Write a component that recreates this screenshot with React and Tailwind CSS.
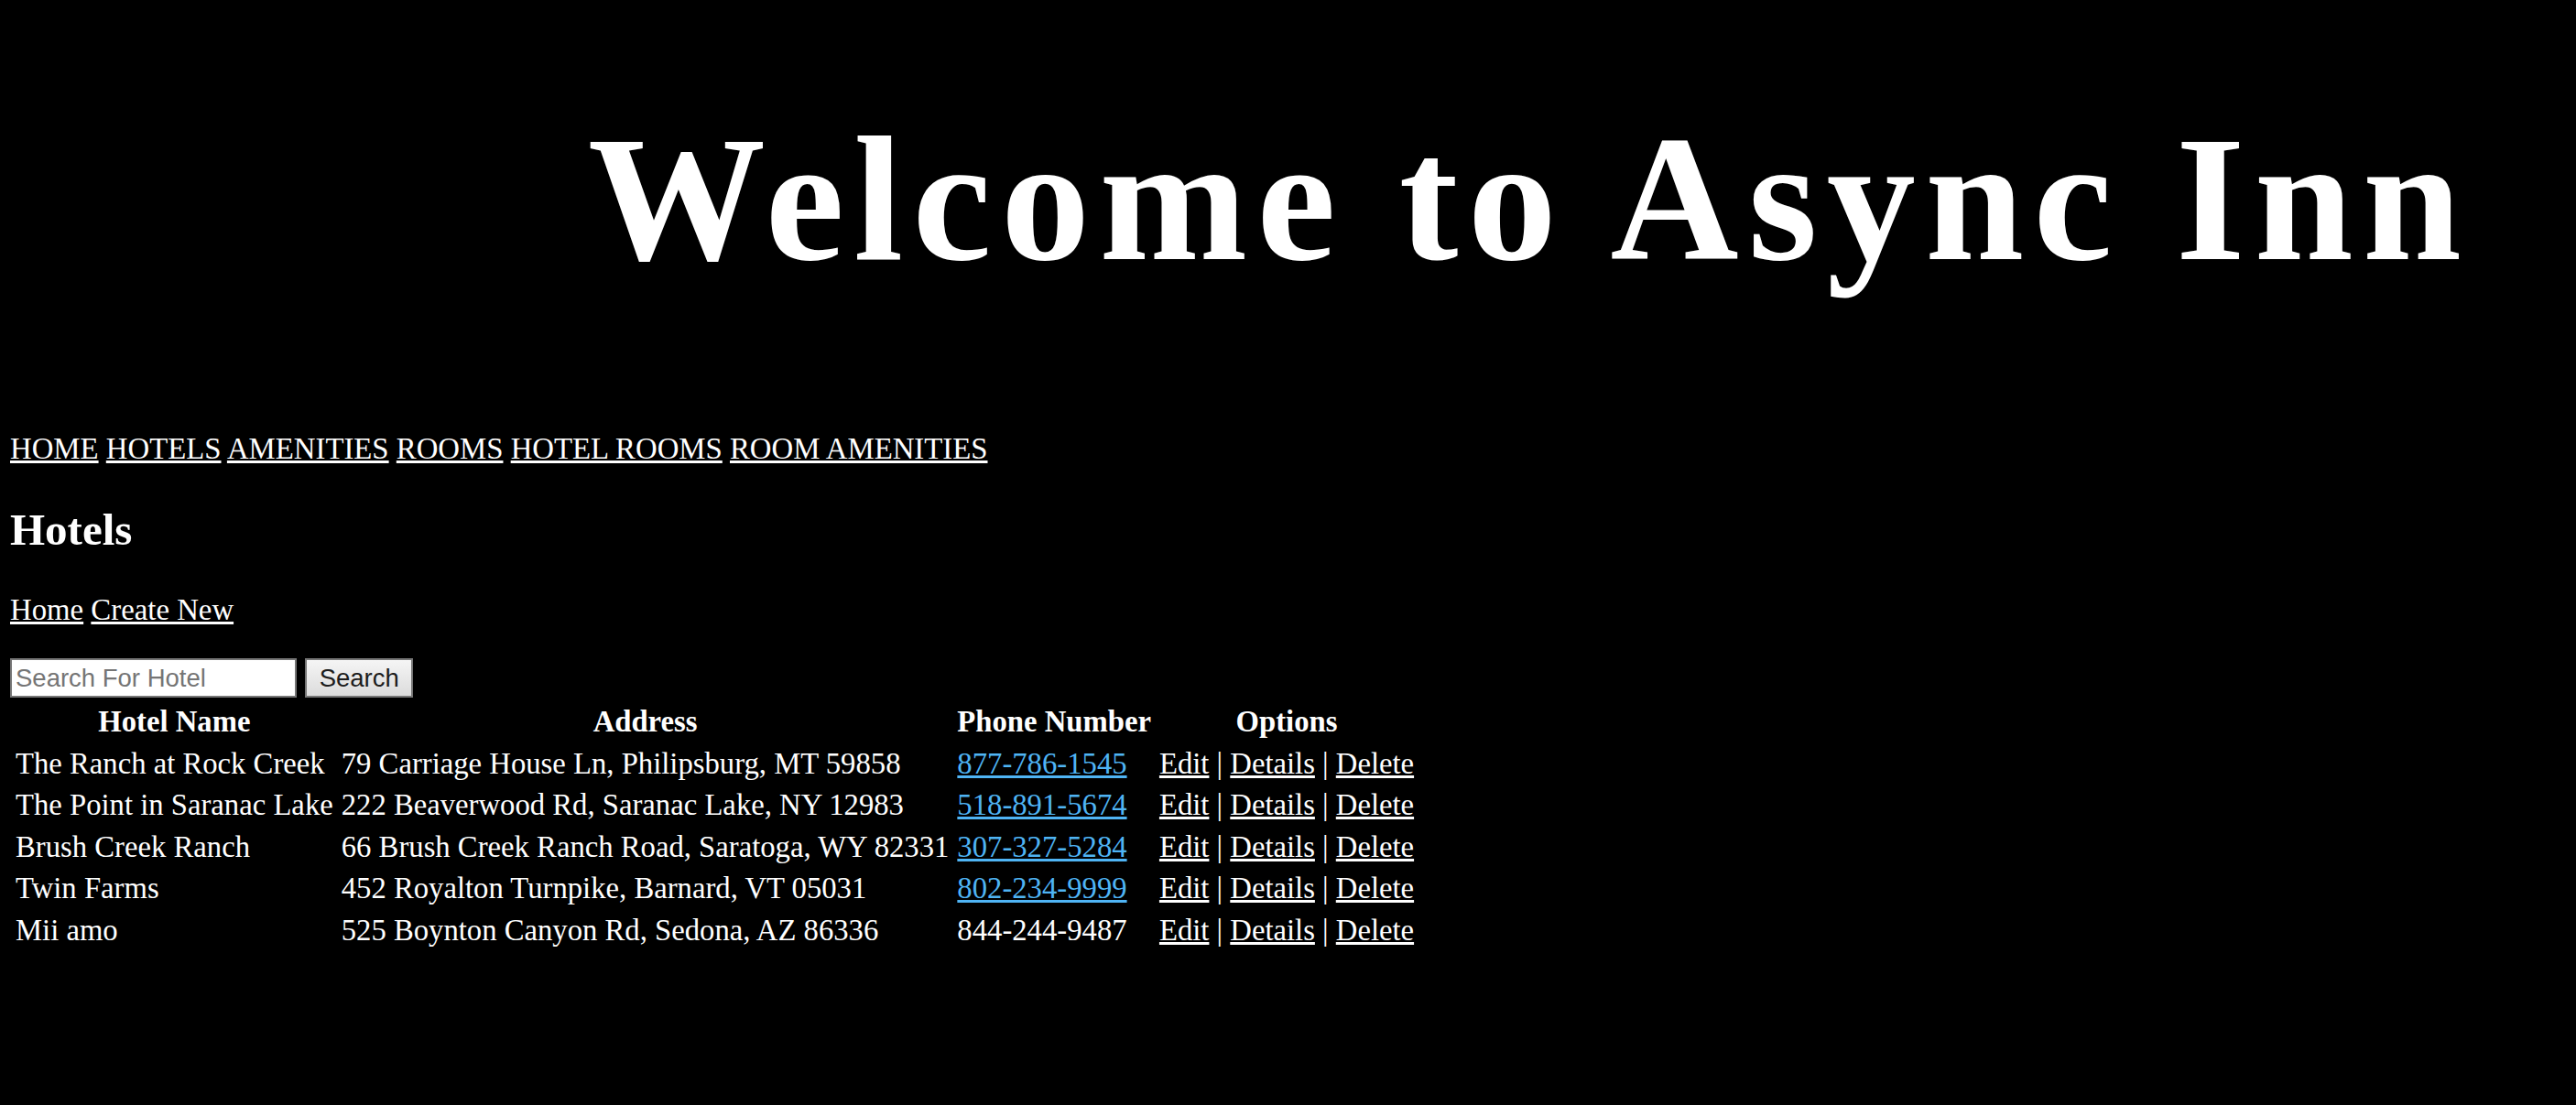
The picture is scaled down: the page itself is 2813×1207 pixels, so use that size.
import React from 'react';

const navLinks = ['HOME', 'HOTELS', 'AMENITIES', 'ROOMS', 'HOTEL ROOMS', 'ROOM AMENITIES'];

const hotels = [
    { name: 'The Ranch at Rock Creek', address: '79 Carriage House Ln, Philipsburg, MT 59858', phone: '877-786-1545', link: true },
    { name: 'The Point in Saranac Lake', address: '222 Beaverwood Rd, Saranac Lake, NY 12983', phone: '518-891-5674', link: true },
    { name: 'Brush Creek Ranch', address: '66 Brush Creek Ranch Road, Saratoga, WY 82331', phone: '307-327-5284', link: true },
    { name: 'Twin Farms', address: '452 Royalton Turnpike, Barnard, VT 05031', phone: '802-234-9999', link: true },
    { name: 'Mii amo', address: '525 Boynton Canyon Rd, Sedona, AZ 86336', phone: '844-244-9487', link: false },
];

export default function App() {
    return (
        <div className="min-h-screen bg-black text-white font-['Liberation_Serif','Times_New_Roman',serif] text-[32.8px] leading-[normal]">
            <header>
                <h1 className="pt-[106px] pl-[642px] text-[194px] font-bold tracking-[10.4px] leading-[normal] whitespace-nowrap">
                    Welcome to Async Inn
                </h1>
            </header>

            <nav className="mt-[143px] px-[11px]">
                {navLinks.map((l, i) => (
                    <React.Fragment key={l}>
                        {i > 0 && ' '}
                        <a href="#" className="underline">{l}</a>
                    </React.Fragment>
                ))}
            </nav>

            <main className="px-[11px]">
                <h2 className="mt-[41px] text-[49px] font-bold leading-[normal]">Hotels</h2>

                <p className="mt-[41px]">
                    <a href="#" className="underline">Home</a>{' '}
                    <a href="#" className="underline">Create New</a>
                </p>

                <form className="mt-[34px] flex items-center gap-[9px]" onSubmit={(e) => e.preventDefault()}>
                    <input
                        type="text"
                        placeholder="Search For Hotel"
                        className="w-[313px] h-[43.4px] bg-white border-2 border-[#767676] px-[4px] text-black text-[27.5px] font-['Liberation_Sans',Arial,sans-serif] placeholder:text-[#757575] outline-none"
                    />
                    <button
                        type="submit"
                        className="w-[118.4px] h-[43.4px] bg-linear-to-b from-[#f5f5f5] to-[#dcdcdc] border-2 border-[#767676] text-[#1c1c1c] text-[27.5px] font-['Liberation_Sans',Arial,sans-serif] leading-none"
                    >
                        Search
                    </button>
                </form>

                <table className="mt-[2px] border-separate border-spacing-[3px] text-[32.7px]">
                    <thead>
                        <tr>
                            <th className="px-[3px] py-[3px] leading-[36.5px] font-bold text-center">Hotel Name</th>
                            <th className="px-[3px] py-[3px] leading-[36.5px] font-bold text-center">Address</th>
                            <th className="px-[3px] py-[3px] leading-[36.5px] font-bold text-center">Phone Number</th>
                            <th className="px-[3px] py-[3px] leading-[36.5px] font-bold text-center">Options</th>
                        </tr>
                    </thead>
                    <tbody>
                        {hotels.map((h) => (
                            <tr key={h.name}>
                                <td className="px-[3px] py-[3px] leading-[36.5px] whitespace-nowrap">{h.name}</td>
                                <td className="px-[3px] py-[3px] leading-[36.5px] whitespace-nowrap">{h.address}</td>
                                <td className="px-[3px] py-[3px] leading-[36.5px] whitespace-nowrap">
                                    {h.link ? (
                                        <a href="#" className="text-[#4fb4f4] underline">{h.phone}</a>
                                    ) : (
                                        h.phone
                                    )}
                                </td>
                                <td className="px-[3px] py-[3px] leading-[36.5px] whitespace-nowrap">
                                    <a href="#" className="underline">Edit</a> |{' '}
                                    <a href="#" className="underline">Details</a> |{' '}
                                    <a href="#" className="underline">Delete</a>
                                </td>
                            </tr>
                        ))}
                    </tbody>
                </table>
            </main>
        </div>
    );
}
